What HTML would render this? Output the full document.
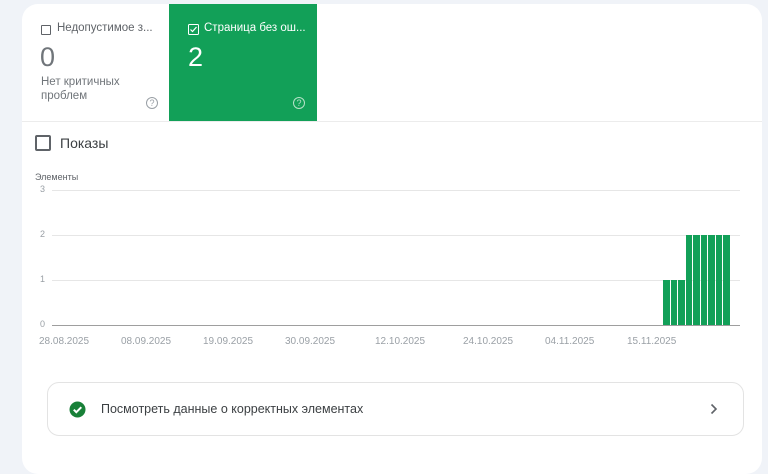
<!DOCTYPE html>
<html><head><meta charset="utf-8"><style>
*{margin:0;padding:0;box-sizing:border-box}
body{width:768px;height:460px;background:#f0f3f8;font-family:"Liberation Sans",Roboto,sans-serif;position:relative;overflow:hidden}
.card{position:absolute;left:22px;top:4px;width:740px;height:470px;background:#fff;border-radius:16px;overflow:hidden}
.a{position:absolute}
.lbl{font-size:11px;color:#9aa0a6}
</style></head><body>
<div class="card"></div>
<div class="a" style="left:22px;top:121px;width:740px;height:1px;background:#ececec"></div>
<div class="a" style="left:41px;top:25px;width:10px;height:10px;border:1px solid #5f6368;border-radius:1px"></div>
<div class="a" style="left:57px;top:22px;font-size:11.5px;color:#5f6368">Недопустимое з...</div>
<div class="a" style="left:40px;top:42px;font-size:27px;color:#70757a">0</div>
<div class="a" style="left:41px;top:75px;font-size:11.5px;line-height:14px;color:#70757a">Нет критичных<br>проблем</div>
<div class="a" style="left:146px;top:97px;width:12px;height:12px;border:1px solid #9aa0a6;border-radius:50%;font-size:9px;line-height:10px;text-align:center;color:#9aa0a6">?</div>
<div class="a" style="left:169px;top:4px;width:148px;height:117px;background:#12a058"></div>
<svg class="a" style="left:188px;top:24px" width="12" height="12"><rect x="0.5" y="0.5" width="10" height="10" rx="1" fill="none" stroke="#fff"/><path d="M2.5 5.5l2 2 4-4.5" fill="none" stroke="#fff" stroke-width="1.2"/></svg>
<div class="a" style="left:204px;top:22px;font-size:11.5px;color:#fff">Страница без ош...</div>
<div class="a" style="left:188px;top:42px;font-size:27px;color:#fff">2</div>
<div class="a" style="left:293px;top:97px;width:12px;height:12px;border:1px solid #b6e2c8;border-radius:50%;font-size:9px;line-height:10px;text-align:center;color:#b6e2c8">?</div>
<div class="a" style="left:35px;top:135px;width:16px;height:16px;border:2px solid #5f6368;border-radius:2px"></div>
<div class="a" style="left:60px;top:135px;font-size:14px;color:#3c4043">Показы</div>
<div class="a" style="left:35px;top:172px;font-size:9px;color:#5f6368">Элементы</div>
<div class="a lbl" style="left:40px;top:184px;font-size:9px">3</div>
<div class="a lbl" style="left:40px;top:229px;font-size:9px">2</div>
<div class="a lbl" style="left:40px;top:274px;font-size:9px">1</div>
<div class="a lbl" style="left:40px;top:319px;font-size:9px">0</div>
<div class="a" style="left:52px;top:190px;width:688px;height:1px;background:#e6e6e6"></div>
<div class="a" style="left:52px;top:235px;width:688px;height:1px;background:#e6e6e6"></div>
<div class="a" style="left:52px;top:280px;width:688px;height:1px;background:#e6e6e6"></div>
<div class="a" style="left:52px;top:325px;width:688px;height:1px;background:#9e9e9e"></div>
<div class="a" style="left:663px;top:280px;width:6.5px;height:45px;background:#12a058"></div>
<div class="a" style="left:670.5px;top:280px;width:6.5px;height:45px;background:#12a058"></div>
<div class="a" style="left:678px;top:280px;width:6.5px;height:45px;background:#12a058"></div>
<div class="a" style="left:685.5px;top:235px;width:6.5px;height:90px;background:#12a058"></div>
<div class="a" style="left:693px;top:235px;width:6.5px;height:90px;background:#12a058"></div>
<div class="a" style="left:700.5px;top:235px;width:6.5px;height:90px;background:#12a058"></div>
<div class="a" style="left:708px;top:235px;width:6.5px;height:90px;background:#12a058"></div>
<div class="a" style="left:715.5px;top:235px;width:6.5px;height:90px;background:#12a058"></div>
<div class="a" style="left:723px;top:235px;width:6.5px;height:90px;background:#12a058"></div>
<div class="a lbl" style="left:39px;top:336px;font-size:10px">28.08.2025</div>
<div class="a lbl" style="left:121px;top:336px;font-size:10px">08.09.2025</div>
<div class="a lbl" style="left:203px;top:336px;font-size:10px">19.09.2025</div>
<div class="a lbl" style="left:285px;top:336px;font-size:10px">30.09.2025</div>
<div class="a lbl" style="left:375px;top:336px;font-size:10px">12.10.2025</div>
<div class="a lbl" style="left:463px;top:336px;font-size:10px">24.10.2025</div>
<div class="a lbl" style="left:545px;top:336px;font-size:10px">04.11.2025</div>
<div class="a lbl" style="left:627px;top:336px;font-size:10px">15.11.2025</div>
<div class="a" style="left:47px;top:382px;width:697px;height:54px;border:1px solid #e3e3e3;border-radius:12px"></div>
<svg class="a" style="left:69px;top:401px" width="17" height="17"><circle cx="8.5" cy="8.5" r="8" fill="#188038"/><path d="M4.8 8.7l2.5 2.5 5-5" fill="none" stroke="#fff" stroke-width="2"/></svg>
<div class="a" style="left:101px;top:402px;font-size:12.5px;color:#3c4043">Посмотреть данные о корректных элементах</div>
<svg class="a" style="left:709px;top:403px" width="10" height="12"><path d="M2.5 1.5l4.5 4.5-4.5 4.5" fill="none" stroke="#5f6368" stroke-width="1.6"/></svg>
</body></html>
